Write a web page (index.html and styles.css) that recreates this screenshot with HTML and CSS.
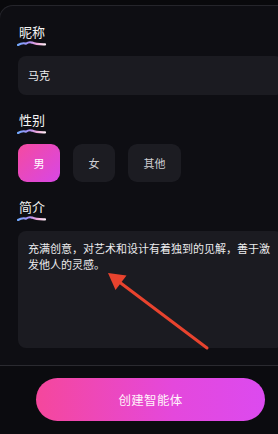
FILE: index.html
```html
<!DOCTYPE html>
<html lang="zh-CN">

<head>
    <meta charset="UTF-8">
    <meta name="viewport" content="width=device-width, initial-scale=1.0">
    <title>创建智能体</title>
    <link rel="stylesheet" href="styles.css">
</head>

<body>
    <div class="viewport">
        <div class="screen">
            <div class="form-card">
                <div class="field">
                    <div class="field-label">昵称</div>
                    <svg class="squiggle" width="30" height="5" viewBox="0 0 30 5">
                        <defs>
                            <linearGradient id="sq1" x1="0" y1="0" x2="1" y2="0">
                                <stop offset="0" stop-color="#72aaff"/>
                                <stop offset="0.4" stop-color="#a98ef6"/>
                                <stop offset="0.7" stop-color="#f0a4d8"/>
                                <stop offset="1" stop-color="#fdeef6"/>
                            </linearGradient>
                        </defs>
                        <path d="M1 4 Q5 1.5 9 2.6 Q12 0.6 15 1.6 Q19 3.6 28 3.4" fill="none" stroke="url(#sq1)" stroke-width="2.2" stroke-linecap="round"/>
                    </svg>
                    <div class="text-input">马克</div>
                </div>

                <div class="field">
                    <div class="field-label">性别</div>
                    <svg class="squiggle" width="30" height="5" viewBox="0 0 30 5">
                        <path d="M1 4 Q5 1.5 9 2.6 Q12 0.6 15 1.6 Q19 3.6 28 3.4" fill="none" stroke="url(#sq1)" stroke-width="2.2" stroke-linecap="round"/>
                    </svg>
                    <div class="gender-options">
                        <button class="gender-btn active">男</button>
                        <button class="gender-btn">女</button>
                        <button class="gender-btn">其他</button>
                    </div>
                </div>

                <div class="field">
                    <div class="field-label">简介</div>
                    <svg class="squiggle" width="30" height="5" viewBox="0 0 30 5">
                        <path d="M1 4 Q5 1.5 9 2.6 Q12 0.6 15 1.6 Q19 3.6 28 3.4" fill="none" stroke="url(#sq1)" stroke-width="2.2" stroke-linecap="round"/>
                    </svg>
                    <div class="text-area">充满创意，对艺术和设计有着独到的见解，善于激发他人的灵感。</div>
                </div>
            </div>

            <div class="footer">
                <button class="create-btn">创建智能体</button>
            </div>

            <!-- 标注箭头 -->
            <svg class="annotation" width="301" height="434" viewBox="0 0 301 434">
                <line x1="207" y1="348" x2="118" y2="281" stroke="#e8432e" stroke-width="3" stroke-linecap="round"/>
                <polygon points="108,273 126.5,275.5 115.5,290" fill="#e8432e"/>
            </svg>
        </div>
    </div>
</body>

</html>
```

FILE: styles.css
```css
html, body {
    margin: 0;
    padding: 0;
    background-color: #09090c;
}

body {
    font-family: "Noto Sans CJK SC", "Noto Sans", sans-serif;
    color: #f2f2f2;
}

/* the screenshot is a crop of a wider phone screen */
.viewport {
    width: 278px;
    height: 434px;
    overflow: hidden;
}

.screen {
    position: relative;
    width: 301px;
    height: 434px;
    padding-top: 5px;
    box-sizing: border-box;
    display: flex;
    flex-direction: column;
}

.form-card {
    margin-left: -1px;
    background-color: #0e0e13;
    border: 1px solid #25252b;
    border-bottom: none;
    border-radius: 14px 14px 0 0;
    padding: 17px 17px 17px 18px;
    display: flex;
    flex-direction: column;
    gap: 16px;
}

.field {
    display: flex;
    flex-direction: column;
}

.field-label {
    font-size: 13px;
    line-height: 17px;
    color: #f4f4f4;
    padding-left: 1px;
}

.squiggle {
    display: block;
    margin-top: 1px;
    margin-bottom: 10px;
    margin-left: -1px;
}

.text-input {
    height: 39px;
    line-height: 39px;
    border-radius: 8px;
    background-color: #1b1b21;
    padding: 0 10px;
    font-size: 11px;
    color: #ececec;
}

.gender-options {
    display: flex;
    gap: 13px;
}

.gender-btn {
    height: 38px;
    padding: 0 15.5px;
    border: none;
    border-radius: 9px;
    background-color: #1c1c22;
    color: #cfcfd3;
    font-family: inherit;
    font-size: 11px;
}

.gender-btn.active {
    background: linear-gradient(135deg, #f54aa0, #d747e6);
    color: #fff;
}

.text-area {
    height: 117px;
    box-sizing: border-box;
    border-radius: 8px;
    background-color: #1b1b21;
    padding: 10px 10px;
    font-size: 11px;
    line-height: 15.5px;
    color: #ececee;
}

.footer {
    flex: 1;
    border-top: 1px solid #2a2a30;
    background-color: #0b0b0f;
    padding-top: 12px;
    display: flex;
    justify-content: center;
    align-items: flex-start;
}

.create-btn {
    width: 229px;
    height: 43px;
    border: none;
    border-radius: 22px;
    background: linear-gradient(90deg, #f5479c, #e448dc 60%, #dc4aef);
    color: #fff3fa;
    font-family: inherit;
    font-size: 12.5px;
    letter-spacing: 0.3px;
}

.annotation {
    position: absolute;
    left: 0;
    top: 0;
    pointer-events: none;
}
```
